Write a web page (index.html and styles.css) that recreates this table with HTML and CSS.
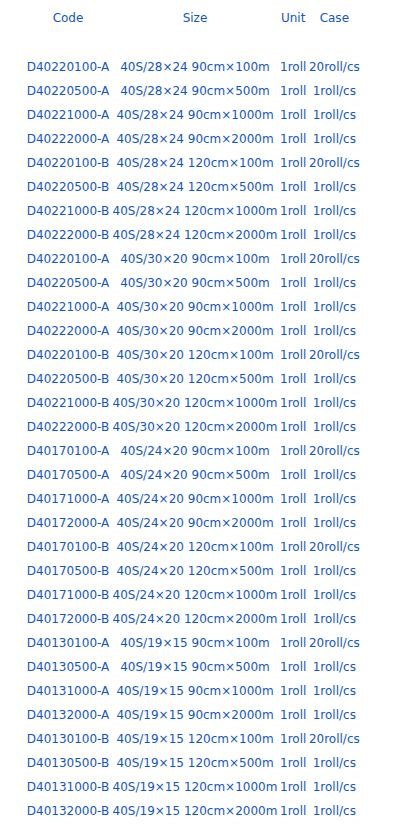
FILE: index.html
```html
<!DOCTYPE html>
<html lang="en">
<head>
    <meta charset="UTF-8">
    <meta name="viewport" content="width=device-width, initial-scale=1.0">
    <title>Products</title>
    <link rel="stylesheet" href="styles.css">
</head>
<body>
    <table class="spec-table">
        <colgroup>
            <col class="col-code">
            <col class="col-size">
            <col class="col-unit">
            <col class="col-case">
        </colgroup>
        <thead>
            <tr>
                <th>Code</th>
                <th>Size</th>
                <th>Unit</th>
                <th>Case</th>
            </tr>
            <tr class="spacer"><td colspan="4"></td></tr>
        </thead>
        <tbody>
            <tr><td>D40220100-A</td><td>40S/28×24 90cm×100m</td><td>1roll</td><td>20roll/cs</td></tr>
            <tr><td>D40220500-A</td><td>40S/28×24 90cm×500m</td><td>1roll</td><td>1roll/cs</td></tr>
            <tr><td>D40221000-A</td><td>40S/28×24 90cm×1000m</td><td>1roll</td><td>1roll/cs</td></tr>
            <tr><td>D40222000-A</td><td>40S/28×24 90cm×2000m</td><td>1roll</td><td>1roll/cs</td></tr>
            <tr><td>D40220100-B</td><td>40S/28×24 120cm×100m</td><td>1roll</td><td>20roll/cs</td></tr>
            <tr><td>D40220500-B</td><td>40S/28×24 120cm×500m</td><td>1roll</td><td>1roll/cs</td></tr>
            <tr><td>D40221000-B</td><td>40S/28×24 120cm×1000m</td><td>1roll</td><td>1roll/cs</td></tr>
            <tr><td>D40222000-B</td><td>40S/28×24 120cm×2000m</td><td>1roll</td><td>1roll/cs</td></tr>
            <tr><td>D40220100-A</td><td>40S/30×20 90cm×100m</td><td>1roll</td><td>20roll/cs</td></tr>
            <tr><td>D40220500-A</td><td>40S/30×20 90cm×500m</td><td>1roll</td><td>1roll/cs</td></tr>
            <tr><td>D40221000-A</td><td>40S/30×20 90cm×1000m</td><td>1roll</td><td>1roll/cs</td></tr>
            <tr><td>D40222000-A</td><td>40S/30×20 90cm×2000m</td><td>1roll</td><td>1roll/cs</td></tr>
            <tr><td>D40220100-B</td><td>40S/30×20 120cm×100m</td><td>1roll</td><td>20roll/cs</td></tr>
            <tr><td>D40220500-B</td><td>40S/30×20 120cm×500m</td><td>1roll</td><td>1roll/cs</td></tr>
            <tr><td>D40221000-B</td><td>40S/30×20 120cm×1000m</td><td>1roll</td><td>1roll/cs</td></tr>
            <tr><td>D40222000-B</td><td>40S/30×20 120cm×2000m</td><td>1roll</td><td>1roll/cs</td></tr>
            <tr><td>D40170100-A</td><td>40S/24×20 90cm×100m</td><td>1roll</td><td>20roll/cs</td></tr>
            <tr><td>D40170500-A</td><td>40S/24×20 90cm×500m</td><td>1roll</td><td>1roll/cs</td></tr>
            <tr><td>D40171000-A</td><td>40S/24×20 90cm×1000m</td><td>1roll</td><td>1roll/cs</td></tr>
            <tr><td>D40172000-A</td><td>40S/24×20 90cm×2000m</td><td>1roll</td><td>1roll/cs</td></tr>
            <tr><td>D40170100-B</td><td>40S/24×20 120cm×100m</td><td>1roll</td><td>20roll/cs</td></tr>
            <tr><td>D40170500-B</td><td>40S/24×20 120cm×500m</td><td>1roll</td><td>1roll/cs</td></tr>
            <tr><td>D40171000-B</td><td>40S/24×20 120cm×1000m</td><td>1roll</td><td>1roll/cs</td></tr>
            <tr><td>D40172000-B</td><td>40S/24×20 120cm×2000m</td><td>1roll</td><td>1roll/cs</td></tr>
            <tr><td>D40130100-A</td><td>40S/19×15 90cm×100m</td><td>1roll</td><td>20roll/cs</td></tr>
            <tr><td>D40130500-A</td><td>40S/19×15 90cm×500m</td><td>1roll</td><td>1roll/cs</td></tr>
            <tr><td>D40131000-A</td><td>40S/19×15 90cm×1000m</td><td>1roll</td><td>1roll/cs</td></tr>
            <tr><td>D40132000-A</td><td>40S/19×15 90cm×2000m</td><td>1roll</td><td>1roll/cs</td></tr>
            <tr><td>D40130100-B</td><td>40S/19×15 120cm×100m</td><td>1roll</td><td>20roll/cs</td></tr>
            <tr><td>D40130500-B</td><td>40S/19×15 120cm×500m</td><td>1roll</td><td>1roll/cs</td></tr>
            <tr><td>D40131000-B</td><td>40S/19×15 120cm×1000m</td><td>1roll</td><td>1roll/cs</td></tr>
            <tr><td>D40132000-B</td><td>40S/19×15 120cm×2000m</td><td>1roll</td><td>1roll/cs</td></tr>
        </tbody>
    </table>
</body>
</html>
```

FILE: styles.css
```css
body {
    margin: 0;
    background-color: #ffffff;
    font-family: "DejaVu Sans", Verdana, sans-serif;
    font-size: 12px;
    color: #1456c0;
}

.spec-table {
    margin: 6px 0 0 24px;
    border-collapse: separate;
    border-spacing: 2px 0;
    table-layout: fixed;
}

.col-code {
    width: 84px;
}

.col-size {
    width: 166px;
}

.col-unit {
    width: 26px;
}

.col-case {
    width: 52px;
}

.spec-table th,
.spec-table td {
    height: 24px;
    padding: 0;
    text-align: center;
    vertical-align: middle;
    white-space: nowrap;
    font-weight: normal;
}

.spec-table .spacer td {
    height: 25px;
}
```
